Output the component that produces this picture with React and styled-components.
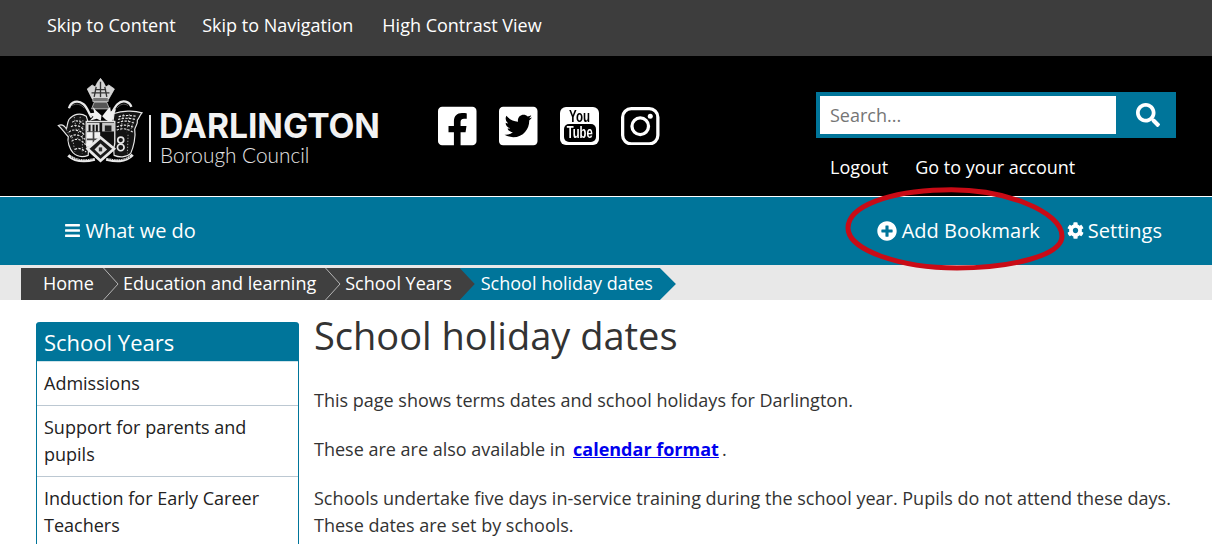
import React from "react";
import styled, { createGlobalStyle } from "styled-components";
import { FaBars, FaPlusCircle, FaCog, FaSearch, FaFacebookSquare, FaTwitterSquare } from "react-icons/fa";

const teal = "#00759a";

const GlobalStyle = createGlobalStyle`
    html, body {
        margin: 0;
        padding: 0;
        background: #fff;
        height: 544px;
        overflow: hidden;
        font-family: "Open Sans", sans-serif;
        font-size: 18px;
        color: #333;
    }
`;

const Page = styled.div`
    position: relative;
    width: 1212px;
    height: 544px;
    overflow: hidden;
`;

const SkipBar = styled.nav`
    display: flex;
    align-items: center;
    height: 56px;
    padding: 0 0 6px 47px;
    box-sizing: border-box;
    background: #3d3d3d;
`;

const SkipLink = styled.a`
    color: #fff;
    font-size: 18px;
    margin-right: ${(p) => p.$gap}px;
`;

const Masthead = styled.header`
    display: flex;
    height: 140px;
    background: #000;
    border-bottom: 1px solid #fff;
    padding: 0 36px 0 57px;
`;

const Logo = styled.div`
    display: flex;
    align-items: flex-start;
    width: 323px;
    height: 140px;
    padding-top: 21px;
    box-sizing: border-box;
`;

const CrestSvg = styled.svg`
    flex-shrink: 0;
    width: 87px;
    height: 87px;
    filter: blur(0.35px);
`;

const LogoText = styled.div`
    border-left: 2px solid #e8e8e8;
    height: 47px;
    margin: 38px 0 0 5px;
    padding-left: 8px;
`;

const LogoName = styled.div`
    margin-top: -4px;
    font-family: "Inter", sans-serif;
    font-weight: 700;
    font-size: 33.6px;
    line-height: 30px;
    color: #f2f2f2;
    white-space: nowrap;
`;

const LogoSub = styled.div`
    margin: 2px 0 0 1px;
    font-family: "Lato", sans-serif;
    font-weight: 300;
    font-size: 20.8px;
    line-height: 24px;
    color: #e4e4e4;
    white-space: nowrap;
`;

const Socials = styled.div`
    display: flex;
    gap: 22.5px;
    margin: 50.7px 0 0 58.3px;
    width: 340px;
`;

const SocialIcon = styled.a`
    display: flex;
    align-items: center;
    justify-content: center;
    width: 38.5px;
    height: 38.5px;
    color: #fff;
    font-size: 44px;
`;

const YouTubeTile = styled.a`
    display: flex;
    flex-direction: column;
    align-items: center;
    justify-content: flex-end;
    width: 38.5px;
    height: 38.5px;
    border-radius: 6px;
    background: #fff;
    overflow: hidden;
`;

const YouWord = styled.span`
    font-family: "Liberation Sans", sans-serif;
    font-weight: 700;
    font-size: 16px;
    line-height: 15px;
    color: #000;
    transform: scaleX(0.72);
`;

const TubeWord = styled.span`
    display: flex;
    justify-content: center;
    width: 32px;
    height: 18px;
    margin-bottom: 3px;
    border-radius: 5px;
    background: #000;
    color: #fff;
    font-family: "Liberation Sans", sans-serif;
    font-weight: 700;
    font-size: 17px;
    line-height: 18px;
`;

const TubeInner = styled.span`
    transform: scaleX(0.66);
`;

const Account = styled.div`
    margin-left: auto;
    width: 360px;
    flex-shrink: 0;
    padding-top: 36px;
`;

const SearchBox = styled.form`
    display: flex;
    height: 46px;
    box-sizing: border-box;
    background: ${teal};
    padding: 4px 0 4px 4px;
`;

const SearchField = styled.div`
    width: 296px;
    background: #fff;
    color: #757575;
    font-size: 18px;
    line-height: 38px;
    padding-left: 10px;
    box-sizing: border-box;
`;

const SearchButton = styled.div`
    flex: 1;
    display: flex;
    align-items: center;
    justify-content: center;
    color: #fff;
    font-size: 24px;
    padding-left: 4px;
`;

const AccountLinks = styled.div`
    display: flex;
    gap: 27px;
    padding: 17px 0 0 14px;
`;

const AccountLink = styled.a`
    color: #fff;
    font-size: 18px;
    line-height: 24px;
`;

const MainNav = styled.nav`
    display: flex;
    align-items: center;
    height: 68px;
    background: ${teal};
    color: #fff;
    font-size: 20px;
    padding: 0 50px 1px 64px;
    box-sizing: border-box;
`;

const NavItem = styled.a`
    display: flex;
    align-items: center;
    gap: ${(p) => p.$gap || 5}px;
    margin-left: ${(p) => p.$left || 0}px;
    color: #fff;
    white-space: nowrap;

    svg {
        font-size: ${(p) => p.$icon || 17}px;
    }
`;

const Spacer = styled.div`
    flex: 1;
`;

const Trail = styled.ol`
    display: flex;
    height: 35px;
    margin: 0;
    padding: 3px 0 0 21px;
    box-sizing: border-box;
    list-style: none;
    background: #e8e8e8;
    font-size: 18px;
    line-height: 31px;
    color: #fff;
`;

const Crumb = styled.li`
    display: flex;
    height: 32px;
    background: #404040;
    white-space: nowrap;
    padding-left: ${(p) => p.$left || 0}px;
    padding-right: ${(p) => p.$right}px;
`;

const CrumbLabel = styled.span`
    padding-left: 4px;
`;

const CurrentCrumb = styled.li`
    height: 32px;
    padding: 0 23px 0 21px;
    background: ${teal};
    white-space: nowrap;
    clip-path: polygon(0 0, calc(100% - 16px) 0, 100% 50%, calc(100% - 16px) 100%, 0 100%, 15px 50%);
`;

const CurrentWrap = styled.div`
    background: linear-gradient(90deg, #404040 16px, transparent 16px);
`;

const Chevron = styled.svg`
    flex-shrink: 0;
    display: block;
    width: 16px;
    height: 32px;
`;

const Content = styled.div`
    display: flex;
    align-items: flex-start;
    padding: 22px 36px 0;
    gap: 15px;
`;

const SideMenu = styled.aside`
    flex: 0 0 263px;
    box-sizing: border-box;
    border: 1px solid ${teal};
    border-top: 0;
    border-radius: 4px 4px 0 0;
`;

const SideTitle = styled.h2`
    margin: 0 -1px;
    height: 39px;
    padding-left: 8px;
    border-radius: 4px 4px 0 0;
    background: ${teal};
    color: #fff;
    font-size: 22px;
    font-weight: 400;
    line-height: 41px;
`;

const SideItem = styled.a`
    display: block;
    padding: 8px 7px;
    border-bottom: 1px solid #bcc8d2;
    border-top: ${(p) => (p.$first ? "1px solid #cfe3ea" : "0")};
    color: #222;
    font-size: 18px;
    line-height: 27px;
`;

const Main = styled.main`
    flex: 1;
`;

const Title = styled.h1`
    margin: -9px 0 30px;
    font-size: 38px;
    font-weight: 400;
    line-height: 44px;
    color: #333;
`;

const Para = styled.p`
    margin: 22px 0 0;
    font-size: 18px;
    line-height: 27px;
    color: #333;
`;

const InlineLink = styled.a`
    margin: 0 3px 0 3px;
    color: #0000ee;
    font-weight: 700;
    text-decoration: underline;
`;

const Highlight = styled.svg`
    position: absolute;
    left: 840px;
    top: 182px;
    width: 232px;
    height: 94px;
    pointer-events: none;
`;

function Crest() {
    return (
        <CrestSvg viewBox="15 10 260 262" fill="none" stroke="#e8e8e8">
            {/* crown */}
            <path d="M120 76 L105 46 L120 34 L129 40 L136 26 L145 14 L154 26 L161 40 L170 34 L187 46 L170 76 Z" fill="#d4d4d4" strokeWidth="2" />
            <path d="M145 24 V72 M128 48 H162 M118 58 H172 M132 40 L126 70 M158 40 L164 70" stroke="#333" strokeWidth="4" />
            <rect x="122" y="72" width="46" height="12" fill="#777" strokeWidth="2" />
            <path d="M126 86 H164 L172 106 H118 Z" fill="#555" strokeWidth="2" />
            {/* mantling */}
            <path d="M50 104 C56 84 76 78 94 92 C104 100 110 118 118 132" strokeWidth="7" />
            <path d="M238 100 C232 84 212 76 196 92 C186 102 180 118 172 132" strokeWidth="7" />
            <path d="M60 96 C72 88 86 92 96 104 M228 96 C216 88 204 92 194 104" stroke="#555" strokeWidth="3" />
            {/* star bursts under the helm */}
            <path d="M148 126 L132 112 L122 100 L126 118 L108 120 L124 130 L112 142 L134 136 L146 142 Z" fill="#eee" stroke="none" />
            <path d="M150 128 L166 108 L174 100 L176 114 L192 106 L186 124 L200 130 L182 138 L176 148 L160 138 Z" fill="#f0f0f0" stroke="none" />
            {/* left supporter */}
            <path d="M102 128 C84 116 62 122 50 138 C44 150 46 158 42 166 C34 152 26 152 18 156 C28 164 36 178 48 190 C44 204 52 226 62 238 C74 250 92 252 108 246 L112 160 Z" fill="#141414" strokeWidth="3.5" />
            <path d="M60 146 C72 138 90 144 98 156 M50 176 C62 164 84 170 96 184 M58 204 C70 192 88 198 100 214 M68 228 C78 222 90 226 102 236 M56 160 C68 152 84 156 96 170 M54 190 C66 180 84 184 98 198" strokeWidth="3.5" strokeDasharray="7 4" />
            <path d="M66 130 L72 170 M84 130 L76 200 M42 168 L58 196 M60 190 L68 236 M92 140 L90 240" stroke="#bbb" strokeWidth="2.5" strokeDasharray="4 5" />
            {/* right supporter */}
            <path d="M186 120 C208 112 246 110 270 118 C262 126 262 134 256 140 C258 152 250 158 248 168 C252 190 244 222 236 240 C222 254 200 252 186 246 L180 160 Z" fill="#141414" strokeWidth="3.5" />
            <path d="M200 130 C216 124 236 126 252 128 M196 148 C212 140 234 142 248 150 M194 170 C210 162 228 166 242 176 M198 138 C214 132 234 134 250 138 M194 160 C210 152 230 154 246 162" strokeWidth="3.5" strokeDasharray="7 4" />
            <path d="M214 122 L206 170 M232 122 L224 176 M246 136 L236 170 M228 184 L226 240" stroke="#bbb" strokeWidth="2.5" strokeDasharray="4 5" />
            <circle cx="206" cy="200" r="9" strokeWidth="5" />
            <circle cx="206" cy="222" r="10" strokeWidth="5" />
            {/* shield */}
            <path d="M102 144 H188 V208 C188 232 164 248 145 262 C126 248 102 232 102 208 Z" fill="#111" strokeWidth="4" />
            <rect x="104" y="176" width="40" height="44" fill="#f2f2f2" stroke="none" />
            <path d="M124 176 V222 M104 198 H144" stroke="#444" strokeWidth="5" />
            <rect x="104" y="148" width="38" height="26" fill="#dcdcdc" stroke="none" />
            <path d="M112 154 V174 M124 154 V174 M134 154 V174" stroke="#111" strokeWidth="6" />
            <rect x="150" y="148" width="36" height="26" fill="#c8c8c8" stroke="none" />
            <path d="M158 156 H178 V174 H158 Z" fill="#222" stroke="none" />
            {/* lozenge */}
            <path d="M145 192 L186 226 L145 262 L106 226 Z" fill="#1a1a1a" strokeWidth="8" />
            <path d="M145 210 L165 228 L145 246 L127 228 Z" fill="#ddd" stroke="none" />
            <rect x="140" y="222" width="10" height="12" fill="#333" stroke="none" />
            {/* motto scroll */}
            <path d="M48 246 C72 268 104 264 128 258 M242 244 C218 268 190 264 162 258" strokeWidth="9" />
            <path d="M56 250 C74 262 102 260 124 256 M234 250 C216 262 190 260 166 256" stroke="#222" strokeWidth="2.5" strokeDasharray="4 3" />
        </CrestSvg>
    );
}

function InstagramIcon() {
    return (
        <svg width="38.5" height="38.5" viewBox="0 0 40 40" fill="none" stroke="#fff" strokeWidth="3.4">
            <rect x="1.7" y="1.7" width="36.6" height="36.6" rx="9" />
            <circle cx="20" cy="20" r="8.6" />
            <circle cx="30.4" cy="9.6" r="2.6" fill="#fff" stroke="none" />
        </svg>
    );
}

function Sep() {
    return (
        <Chevron viewBox="0 0 16 32">
            <path d="M0.5 0 L15 16 L0.5 32" fill="none" stroke="#b4b4b4" strokeWidth="1" />
        </Chevron>
    );
}

function App() {
    return (
        <Page>
            <GlobalStyle />
            <SkipBar>
                <SkipLink $gap={26.5}>Skip to Content</SkipLink>
                <SkipLink $gap={29}>Skip to Navigation</SkipLink>
                <SkipLink>High Contrast View</SkipLink>
            </SkipBar>
            <Masthead>
                <Logo>
                    <Crest />
                    <LogoText>
                        <LogoName>DARLINGTON</LogoName>
                        <LogoSub>Borough Council</LogoSub>
                    </LogoText>
                </Logo>
                <Socials>
                    <SocialIcon><FaFacebookSquare /></SocialIcon>
                    <SocialIcon><FaTwitterSquare /></SocialIcon>
                    <YouTubeTile>
                        <YouWord>You</YouWord>
                        <TubeWord><TubeInner>Tube</TubeInner></TubeWord>
                    </YouTubeTile>
                    <SocialIcon><InstagramIcon /></SocialIcon>
                </Socials>
                <Account>
                    <SearchBox>
                        <SearchField>Search...</SearchField>
                        <SearchButton><FaSearch /></SearchButton>
                    </SearchBox>
                    <AccountLinks>
                        <AccountLink>Logout</AccountLink>
                        <AccountLink>Go to your account</AccountLink>
                    </AccountLinks>
                </Account>
            </Masthead>
            <MainNav>
                <NavItem $gap={4.5}><FaBars />What we do</NavItem>
                <Spacer />
                <NavItem $icon={20}><FaPlusCircle />Add Bookmark</NavItem>
                <NavItem $left={27} $gap={4}><FaCog />Settings</NavItem>
            </MainNav>
            <Trail>
                <Crumb $left={22} $right={9}>Home</Crumb>
                <Crumb $right={9}><Sep /><CrumbLabel>Education and learning</CrumbLabel></Crumb>
                <Crumb $right={8}><Sep /><CrumbLabel>School Years</CrumbLabel></Crumb>
                <CurrentWrap>
                    <CurrentCrumb>School holiday dates</CurrentCrumb>
                </CurrentWrap>
            </Trail>
            <Content>
                <SideMenu>
                    <SideTitle>School Years</SideTitle>
                    <SideItem $first>Admissions</SideItem>
                    <SideItem>Support for parents and pupils</SideItem>
                    <SideItem>Induction for Early Career Teachers</SideItem>
                </SideMenu>
                <Main>
                    <Title>School holiday dates</Title>
                    <Para>This page shows terms dates and school holidays for Darlington.</Para>
                    <Para>These are are also available in <InlineLink>calendar format</InlineLink>.</Para>
                    <Para>Schools undertake five days in-service training during the school year. Pupils do not attend these days. These dates are set by schools.</Para>
                </Main>
            </Content>
            <Highlight viewBox="840 182 232 94">
                <path
                    d="M943 190 C1005 188 1062 212 1062 236 C1062 256 1010 268 957 268 C900 268 848 250 848 228 C848 206 890 191 943 190 Z"
                    fill="none"
                    stroke="#c90b16"
                    strokeWidth="5"
                />
            </Highlight>
        </Page>
    );
}

export default App;
